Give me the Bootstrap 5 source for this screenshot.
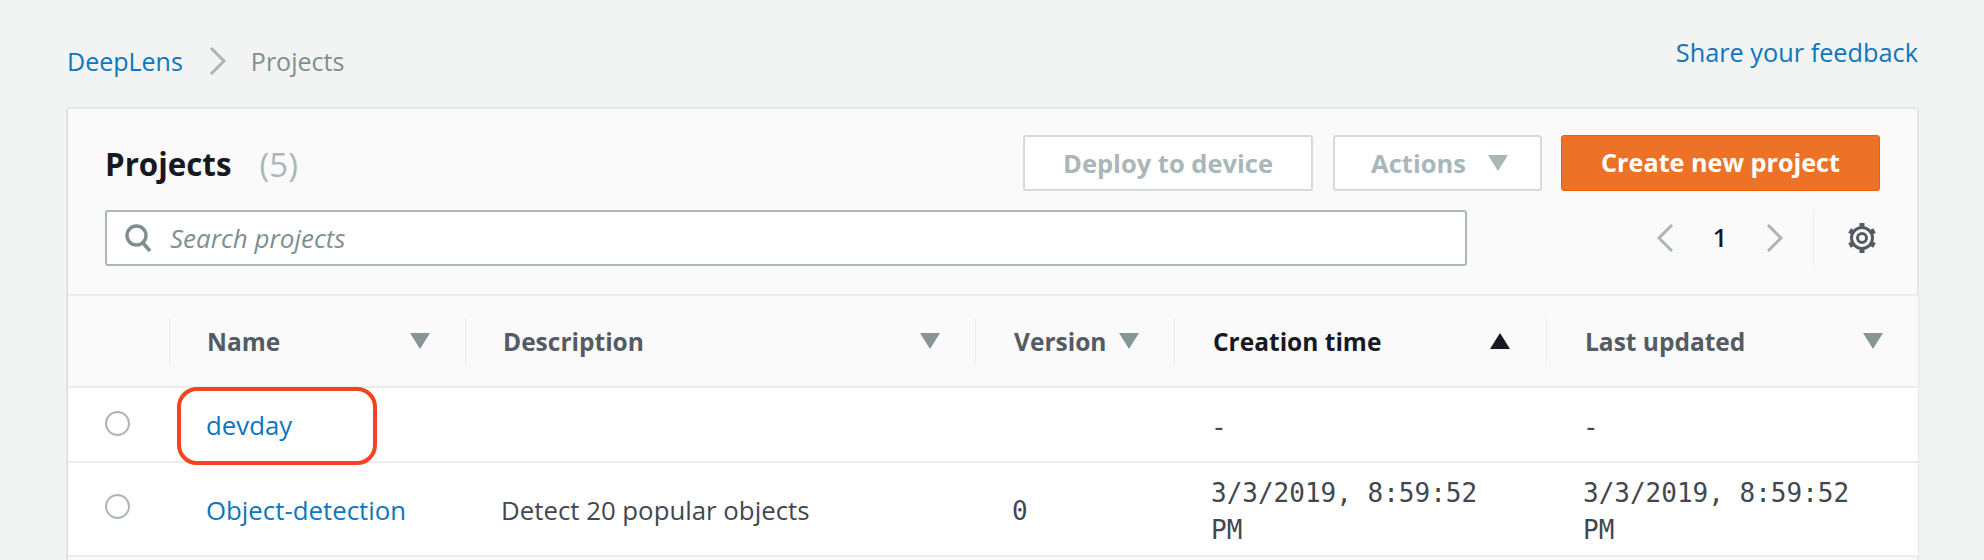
<!DOCTYPE html>
<html lang="en">
<head>
  <meta charset="UTF-8" />
  <title>Projects</title>
  <link href="https://cdn.jsdelivr.net/npm/bootstrap@5.3.3/dist/css/bootstrap.min.css" rel="stylesheet">
  <style>
    html, body { height: 560px; overflow: hidden; }
    body { background: #f2f3f3; font-family: "Open Sans", "Liberation Sans", sans-serif; font-size: 25.8px; color: #414750; }
    a { color: #0f75bc; text-decoration: none; }
    .page-wrap { padding: 0 66px 0 67px; }
    .top-bar { height: 108px; }
    .crumbs { padding-top: 44px; line-height: 34px; font-size: 25px; }
    .crumb-now { color: #7f8f90; }
    .crumb-sep { margin: 0 25px 0 26px; }
    .feedback { padding-top: 35px; line-height: 34px; font-size: 25.3px; }
    .panel { background: #fafafa; border: 1px solid #e3e7e7; border-left-color: #d5dbdb; height: 460px; box-shadow: 0 0 2px rgba(0,22,43,.12); }
    .panel-head { height: 187px; padding: 26px 37px 0 37px; border-bottom: 2px solid #eaeded; }
    .title-row { height: 56px; }
    .panel-title { font-size: 31.3px; font-weight: 700; color: #16191f; margin: 3px 0 0; }
    .panel-count { font-size: 33px; color: #aab7b8; margin-left: 28px; margin-top: 3px; }
    .btn-off, .btn-off:disabled { background: #fff; border: 2px solid #d5dbdb; color: #aab7b8; font-size: 25.5px; font-weight: 700; height: 56px; border-radius: 3px; opacity: 1; padding: 0; }
    .btn-deploy { width: 290px; margin-right: 20px; }
    .btn-off.btn-actions { width: 209px; margin-right: 19px; gap: 22px; padding-left: 4px; }
    .btn-create { width: 319px; height: 56px; background: #ec7228; border: 1px solid #eb5f07; color: #fff; font-size: 25.2px; font-weight: 700; border-radius: 3px; padding: 0; }
    .search-row { margin-top: 19px; height: 56px; }
    .search-box { width: 1362px; height: 56px; background: #fff; border: 2px solid #aab7b8; border-radius: 3px; padding-left: 18px; }
    .search-box input { border: 0; outline: 0; flex: 1; margin-left: 16px; font-style: italic; font-size: 26px; background: transparent; color: #414750; font-family: inherit; }
    .search-box input::placeholder { color: #7f8f90; opacity: 1; }
    .pager { margin-left: auto; margin-right: 3px; }
    .pager-num { width: 46px; text-align: center; font-weight: 600; color: #16191f; margin: 0 23px 0 23px; font-size: 25px; }
    .pager-sep { border-left: 1px solid #eaeded; height: 56px; margin-left: 29px; padding-left: 33px; }
    .project-table { table-layout: fixed; width: 100%; margin: 0; --bs-table-bg: transparent; border-color: #eaeded; }
    .project-table th { background: #fafafa; height: 91px; padding: 0; font-size: 24.5px; font-weight: 700; color: #545b64; vertical-align: middle; border-bottom: 2px solid #eaeded; }
    .project-table td { background: #fff; padding: 2px 0 0 37px; vertical-align: middle; color: #414750; border-bottom: 2px solid #eaeded; }
    .w-radio { width: 101px; }
    .w-name { width: 296px; }
    .w-desc { width: 510px; }
    .w-ver { width: 199px; }
    .w-time { width: 372px; }
    .head-cell { height: 46px; border-left: 1px solid #eaeded; padding: 2px 35px 0 37px; }
    .head-cell.tight { padding-right: 35px; padding-left: 38px; }
    .head-cell.active-sort { color: #16191f; padding-left: 38px; padding-right: 36px; }
    .head-cell.last-sort { padding-left: 38px; }
    .row-one td { height: 75px; }
    .row-two td { height: 94px; }
    .radio-dot { display: block; width: 25px; height: 25px; margin-left: -1px; border: 2px solid #aab7b8; border-radius: 50%; background: #fff; }
    .project-table td.radio-cell { padding-left: 38px; padding-top: 0; }
    .project-table td.radio-one { padding-bottom: 2px; }
    .project-table td.radio-two { padding-bottom: 6px; }
    .project-table td.mono { font-family: "DejaVu Sans Mono", monospace; font-size: 26px; line-height: 37px; padding-top: 5px; }
    .project-table td.cell-desc { padding-left: 36px; }
    .project-table td.cell-time { padding-left: 37px; padding-right: 34px; }
    .callout-anchor { position: relative; }
    .callout { position: absolute; left: 8px; top: -1px; width: 200px; height: 78px; border: 4px solid #f4431f; border-radius: 20px; pointer-events: none; }
    .sort-caret { display: block; flex-shrink: 0; margin-bottom: 2px; }
  </style>
</head>
<body>
  <div class="page-wrap">
    <div class="top-bar d-flex justify-content-between">
      <div class="crumbs d-flex align-items-center align-self-start">
        <a href="#">DeepLens</a>
        <svg class="crumb-sep" width="17" height="28" viewBox="0 0 17 28"><path d="M2 1l13 13L2 27" fill="none" stroke="#aab7b8" stroke-width="3"/></svg>
        <span class="crumb-now">Projects</span>
      </div>
      <a class="feedback" href="#">Share your feedback</a>
    </div>

    <div class="panel">
      <div class="panel-head">
        <div class="title-row d-flex align-items-center">
          <h2 class="panel-title">Projects</h2>
          <span class="panel-count">(5)</span>
          <div class="ms-auto d-flex">
            <button class="btn btn-off btn-deploy" disabled>Deploy to device</button>
            <button class="btn btn-off btn-actions d-flex align-items-center justify-content-center" disabled>
              Actions
              <svg width="20" height="16" viewBox="0 0 20 16"><path d="M0 0h20L10 16z" fill="#aab7b8"/></svg>
            </button>
            <button class="btn btn-create">Create new project</button>
          </div>
        </div>
        <div class="search-row d-flex align-items-center">
          <div class="search-box d-flex align-items-center">
            <svg width="27" height="28" viewBox="0 0 27 28"><circle cx="11.5" cy="11.5" r="9.5" fill="none" stroke="#7f8f90" stroke-width="3.4"/><path d="M18 19l7 8" stroke="#7f8f90" stroke-width="3.6" fill="none"/></svg>
            <input type="text" placeholder="Search projects">
          </div>
          <div class="pager d-flex align-items-center">
            <svg width="18" height="28" viewBox="0 0 18 28"><path d="M16 1L3 14l13 13" fill="none" stroke="#aab7b8" stroke-width="3"/></svg>
            <span class="pager-num">1</span>
            <svg width="18" height="28" viewBox="0 0 18 28"><path d="M2 1l13 13L2 27" fill="none" stroke="#aab7b8" stroke-width="3"/></svg>
            <div class="pager-sep d-flex align-items-center">
              <svg width="30" height="30" viewBox="0 0 30 30"><circle cx="15" cy="15" r="10.5" fill="none" stroke="#545b64" stroke-width="3"/><circle cx="15" cy="15" r="4.5" fill="none" stroke="#545b64" stroke-width="3"/><path d="M15 0v4M15 26v4M2.500 7.500l3.500 2M24 20.500l3.500 2M2.500 22.500l3.500-2M24 9.500l3.500-2" stroke="#545b64" stroke-width="5"/></svg>
            </div>
          </div>
        </div>
      </div>

      <table class="table project-table">
        <colgroup>
          <col class="w-radio"><col class="w-name"><col class="w-desc"><col class="w-ver"><col class="w-time"><col class="w-time">
        </colgroup>
        <thead>
          <tr>
            <th></th>
            <th><div class="head-cell d-flex align-items-center justify-content-between">Name<svg class="sort-caret" width="20" height="16" viewBox="0 0 20 16"><path d="M0 0h20L10 16z" fill="#879596"/></svg></div></th>
            <th><div class="head-cell d-flex align-items-center justify-content-between">Description<svg class="sort-caret" width="20" height="16" viewBox="0 0 20 16"><path d="M0 0h20L10 16z" fill="#879596"/></svg></div></th>
            <th><div class="head-cell tight d-flex align-items-center justify-content-between">Version<svg class="sort-caret" width="20" height="16" viewBox="0 0 20 16"><path d="M0 0h20L10 16z" fill="#879596"/></svg></div></th>
            <th><div class="head-cell active-sort d-flex align-items-center justify-content-between">Creation time<svg class="sort-caret" width="20" height="16" viewBox="0 0 20 16"><path d="M10 0l10 16H0z" fill="#16191f"/></svg></div></th>
            <th><div class="head-cell last-sort d-flex align-items-center justify-content-between">Last updated<svg class="sort-caret" width="20" height="16" viewBox="0 0 20 16"><path d="M0 0h20L10 16z" fill="#879596"/></svg></div></th>
          </tr>
        </thead>
        <tbody>
          <tr class="row-one">
            <td class="radio-cell radio-one"><span class="radio-dot"></span></td>
            <td class="callout-anchor"><a href="#">devday</a><span class="callout"></span></td>
            <td class="cell-desc"></td>
            <td></td>
            <td class="cell-time mono">-</td>
            <td class="cell-time mono">-</td>
          </tr>
          <tr class="row-two">
            <td class="radio-cell radio-two"><span class="radio-dot"></span></td>
            <td><a href="#">Object-detection</a></td>
            <td class="cell-desc">Detect 20 popular objects</td>
            <td class="mono">0</td>
            <td class="cell-time mono">3/3/2019, 8:59:52 PM</td>
            <td class="cell-time mono">3/3/2019, 8:59:52 PM</td>
          </tr>
        </tbody>
      </table>
    </div>
  </div>
</body>
</html>
